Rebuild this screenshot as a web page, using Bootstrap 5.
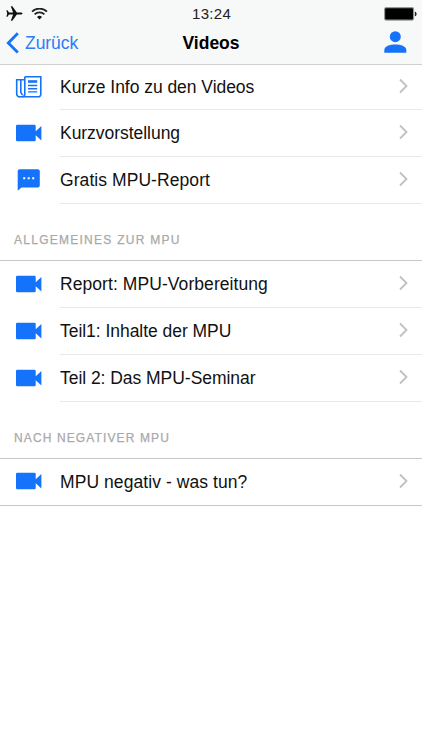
<!DOCTYPE html>
<html lang="de">
<head>
<meta charset="utf-8">
<meta name="viewport" content="width=device-width, initial-scale=1">
<title>Videos</title>
<link href="https://cdn.jsdelivr.net/npm/bootstrap@5.3.0/dist/css/bootstrap.min.css" rel="stylesheet">
<style>
body { font-family: "Liberation Sans", Arial, sans-serif; color: #111; background: #fff; overflow: hidden; }
svg { display: block; flex: none; }
.app-top { height: 65px; background: #f7f8f8; border-bottom: 1px solid #cfd0d0; }
.status-bar { height: 27px; padding: 1px 5px 0 6px; }
.clock { font-size: 15px; color: #222; letter-spacing: .3px; line-height: 26px; }
.title-bar { height: 37px; padding: 0 6px 5px; }
.side { flex: 1 1 0; }
.profile { padding: 0 9px 2px 0; }
.back { font-size: 17.5px; color: #2b7df5; line-height: 31px; letter-spacing: -.05px; padding-right: 9px; }
.page-title { font-size: 17.5px; line-height: 31px; color: #000; }
.entry { height: 47px; padding-left: 15px; color: #111; font-size: 17.5px; line-height: 24px; letter-spacing: -.04px; }
.entry.roomy { letter-spacing: .07px; }
.entry.first { height: 45px; }
.entry .glyph { width: 45px; flex: none; padding-bottom: 2px; }
.entry .body-line { border-bottom: 1px solid #e8e8e8; padding-right: 13px; }
.body-line svg { margin-bottom: 2px; }
.section-label { height: 57px; padding: 14px 14px 0; font-size: 12px; line-height: 44px; letter-spacing: 1.26px; color: #a9a9a9; border-bottom: 1px solid #c8c8c8; -webkit-text-stroke: .25px #a9a9a9; }
.section-label.snug { letter-spacing: 1.12px; }
.closing { border-bottom: 1px solid #c8c8c8; }
.closing .body-line { border-bottom: 0; }
</style>
</head>
<body>
<svg width="0" height="0" class="position-absolute" aria-hidden="true">
  <symbol id="cam" viewBox="0 0 27 18"><path fill="#1473fa" d="M2.300.7h17.100a1.300 1.300 0 0 1 1.300 1.300v5.200L26.400 2.100v14.400l-5.700-5.300V16a1.300 1.300 0 0 1-1.300 1.300H2.300A1.300 1.300 0 0 1 1 16V2A1.300 1.300 0 0 1 2.300.7z"/></symbol>
  <symbol id="chev" viewBox="0 0 10 16"><path fill="none" stroke="#c0c0c0" stroke-width="1.800" d="M1 1.500 7.500 8 1 14.500"/></symbol>
</svg>

<header class="app-top">
  <div class="status-bar d-flex align-items-center">
    <div class="side d-flex align-items-center gap-2">
      <svg width="17" height="16" viewBox="0 0 17 16"><path fill="#111" d="M16.500 7.500c0-.7-.9-1.100-2-1.100h-3.600L6.300.3H4.800l2.300 6.100H3L1.500 4.200H.4l.8 3.300-.8 3.300h1.100L3 8.600h4.100l-2.300 6.100h1.500l4.600-6.100h3.600c1.100 0 2-.4 2-1.100z"/></svg>
      <svg width="17" height="13" viewBox="0 0 17 13"><g transform="translate(0 -1)"><g fill="none" stroke="#222" stroke-width="1.700"><path d="M1 4.700a10.600 10.600 0 0 1 15 0M3.600 7.400a7 7 0 0 1 9.800 0"/></g><path fill="#111" d="M8.500 12.500 6 9.900a3.600 3.600 0 0 1 5 0z"/></g></svg>
    </div>
    <div class="clock">13:24</div>
    <div class="side d-flex justify-content-end">
      <svg width="33" height="14" viewBox="0 0 33 14"><rect x=".6" y=".6" width="29" height="12.500" rx="1.500" fill="#000" stroke="#999" stroke-width="1.100"/><path fill="#222" d="M30.800 4.500c1.300.5 1.800 1.300 1.800 2.400s-.5 1.900-1.800 2.400z"/></svg>
    </div>
  </div>
  <nav class="title-bar d-flex align-items-center" aria-label="Navigation">
    <a href="#" class="side back d-flex align-items-center text-decoration-none">
      <svg width="19" height="22" viewBox="0 0 19 22"><path fill="none" stroke="#1473fa" stroke-width="2.800" d="M11.800 1.300 2.300 10.900l9.500 9.600"/></svg>
      <span>Zurück</span>
    </a>
    <h1 class="page-title fw-bold m-0">Videos</h1>
    <a href="#" class="side profile d-flex justify-content-end" aria-label="Profil">
      <svg width="23" height="22" viewBox="0 0 23 22"><g fill="#1473fa"><circle cx="11.300" cy="5.700" r="5.500"/><path d="M.3 21.800v-2.700c0-3.700 5.500-5.500 11-5.500s11 1.800 11 5.500v2.700z"/></g></svg>
    </a>
  </nav>
</header>

<main>
  <a href="#" class="entry first d-flex text-decoration-none">
    <span class="glyph d-flex align-items-center"><svg width="28" height="24" viewBox="0 0 28 24"><g fill="none" stroke="#1473fa" stroke-width="1.600"><path d="M9.800 1.800h16v17.500a2.500 2.500 0 0 1-2.500 2.500H4.600"/><path d="M9.800 1.800v17.300a2.700 2.700 0 0 1-2.600 2.700"/><path d="M9.800 4.800H5.800v12.600l1.700 2.800"/><path d="M5.800 4.800H1.700v13.900a3 3 0 0 0 3.400 3.100"/></g><g fill="#1473fa"><path d="M13 5.200h9.200v2.600H13z"/><path d="M13 9.800h9.200v1.400H13zM13 13h9.200v1.400H13zM13 16.200h9.200v1.400H13z"/></g></svg></span>
    <span class="body-line flex-grow-1 d-flex align-items-center justify-content-between"><span>Kurze Info zu den Videos</span><svg width="10" height="16"><use href="#chev"/></svg></span>
  </a>
  <a href="#" class="entry d-flex text-decoration-none">
    <span class="glyph d-flex align-items-center"><svg width="27" height="18"><use href="#cam"/></svg></span>
    <span class="body-line flex-grow-1 d-flex align-items-center justify-content-between"><span>Kurzvorstellung</span><svg width="10" height="16"><use href="#chev"/></svg></span>
  </a>
  <a href="#" class="entry roomy d-flex text-decoration-none">
    <span class="glyph d-flex align-items-center"><svg width="27" height="22" viewBox="0 0 27 22"><path fill="#1473fa" d="M4.500.2h18.300a2 2 0 0 1 2 2v14.300a2 2 0 0 1-2 2H6.500L2.700 21.700V2.200a2 2 0 0 1 1.800-2z"/><path fill="#fff" d="M8.200 8.300h2v2h-2zM12.700 8.300h2v2h-2zM17.200 8.300h2v2h-2z"/></svg></span>
    <span class="body-line flex-grow-1 d-flex align-items-center justify-content-between"><span>Gratis MPU-Report</span><svg width="10" height="16"><use href="#chev"/></svg></span>
  </a>

  <h2 class="section-label m-0 fw-normal text-uppercase">Allgemeines zur MPU</h2>
  <a href="#" class="entry roomy d-flex text-decoration-none">
    <span class="glyph d-flex align-items-center"><svg width="27" height="18"><use href="#cam"/></svg></span>
    <span class="body-line flex-grow-1 d-flex align-items-center justify-content-between"><span>Report: MPU-Vorbereitung</span><svg width="10" height="16"><use href="#chev"/></svg></span>
  </a>
  <a href="#" class="entry d-flex text-decoration-none">
    <span class="glyph d-flex align-items-center"><svg width="27" height="18"><use href="#cam"/></svg></span>
    <span class="body-line flex-grow-1 d-flex align-items-center justify-content-between"><span>Teil1: Inhalte der MPU</span><svg width="10" height="16"><use href="#chev"/></svg></span>
  </a>
  <a href="#" class="entry d-flex text-decoration-none">
    <span class="glyph d-flex align-items-center"><svg width="27" height="18"><use href="#cam"/></svg></span>
    <span class="body-line flex-grow-1 d-flex align-items-center justify-content-between"><span>Teil 2: Das MPU-Seminar</span><svg width="10" height="16"><use href="#chev"/></svg></span>
  </a>

  <h2 class="section-label snug m-0 fw-normal text-uppercase">Nach negativer MPU</h2>
  <a href="#" class="entry closing roomy d-flex text-decoration-none">
    <span class="glyph d-flex align-items-center"><svg width="27" height="18"><use href="#cam"/></svg></span>
    <span class="body-line flex-grow-1 d-flex align-items-center justify-content-between"><span>MPU negativ - was tun?</span><svg width="10" height="16"><use href="#chev"/></svg></span>
  </a>
</main>
<script src="https://cdn.jsdelivr.net/npm/bootstrap@5.3.0/dist/js/bootstrap.bundle.min.js"></script>
</body>
</html>
